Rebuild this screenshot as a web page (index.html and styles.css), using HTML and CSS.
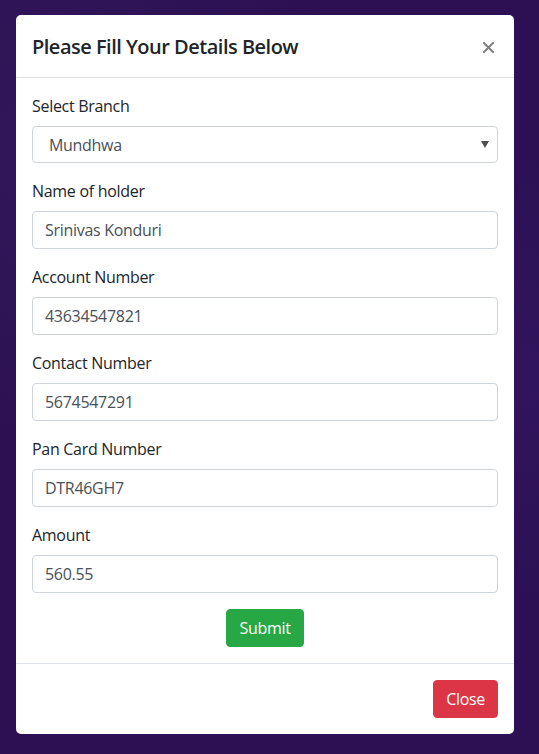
FILE: index.html
```html
<!DOCTYPE html>
<html lang="en">
<head>
<meta charset="utf-8">
<title>Please Fill Your Details Below</title>
<link rel="stylesheet" href="styles.css">
</head>
<body>
<div class="backdrop">
  <div class="modal">
    <div class="modal-header">
      <h5 class="modal-title">Please Fill Your Details Below</h5>
      <button class="close" type="button" aria-label="Close">
        <svg width="11" height="11" viewBox="0 0 11 11"><path d="M1 1L10 10M10 1L1 10" stroke="#808080" stroke-width="2" stroke-linecap="square"/></svg>
      </button>
    </div>
    <form class="modal-body">
      <div class="form-group">
        <label class="label">Select Branch</label>
        <div class="select">
          <span class="select-value">Mundhwa</span>
          <svg class="select-arrow" width="8" height="7" viewBox="0 0 8 7"><path d="M0 0H8L4 7Z" fill="#505050"/></svg>
        </div>
      </div>
      <div class="form-group">
        <label class="label">Name of holder</label>
        <div class="input">Srinivas Konduri</div>
      </div>
      <div class="form-group">
        <label class="label">Account Number</label>
        <div class="input">43634547821</div>
      </div>
      <div class="form-group">
        <label class="label">Contact Number</label>
        <div class="input">5674547291</div>
      </div>
      <div class="form-group">
        <label class="label">Pan Card Number</label>
        <div class="input">DTR46GH7</div>
      </div>
      <div class="form-group">
        <label class="label">Amount</label>
        <div class="input">560.55</div>
      </div>
      <div class="center">
        <button type="button" class="btn btn-success">Submit</button>
      </div>
    </form>
    <div class="modal-footer">
      <button type="button" class="btn btn-danger">Close</button>
    </div>
  </div>
</div>
</body>
</html>
```

FILE: styles.css
```css
* { box-sizing: border-box; }
html, body { margin: 0; padding: 0; height: 100%; }
body {
  font-family: "Open Sans", "Noto Sans", sans-serif;
  font-size: 16px;
  line-height: 1.5;
  color: #212529;
  background: #2d1053;
}
.backdrop {
  min-height: 754px;
  padding: 15px 25px 20px 16px;
  background:
    radial-gradient(circle at 10% 20%, rgba(80, 50, 130, 0.2), transparent 40%),
    radial-gradient(circle at 95% 50%, rgba(70, 40, 130, 0.2), transparent 40%),
    #2c1053;
}
.modal {
  width: 498px;
  background: #fff;
  border-radius: 5px;
  overflow: hidden;
}
.modal-header {
  display: flex;
  align-items: center;
  justify-content: space-between;
  height: 63px;
  padding: 2px 16px 0;
  border-bottom: 1px solid #dee2e6;
}
.modal-title {
  margin: 0;
  font-size: 20px;
  font-weight: 600;
  line-height: 30px;
  letter-spacing: -0.5px;
}
.close {
  display: flex;
  border: 0;
  background: none;
  padding: 0;
  margin-right: 4px;
}
.modal-body {
  display: block;
  padding: 16px;
}
.form-group { margin-bottom: 16px; }
.label {
  display: block;
  margin-bottom: 8px;
  line-height: 24px;
  letter-spacing: -0.3px;
}
.input, .select {
  height: 38px;
  padding: 6px 12px;
  border: 1px solid #ced4da;
  border-radius: 4px;
  color: #495057;
  line-height: 24px;
  letter-spacing: -0.3px;
}
.select {
  display: flex;
  align-items: center;
  justify-content: space-between;
  height: 37px;
  padding-left: 16px;
  padding-right: 8px;
}
.center { display: flex; justify-content: center; }
.btn {
  height: 38px;
  padding: 6px 12px;
  border: 1px solid transparent;
  border-radius: 4px;
  font-family: inherit;
  font-size: 16px;
  line-height: 24px;
  color: #fff;
  letter-spacing: -0.3px;
}
.btn-success { background: #28a745; border-color: #28a745; }
.btn-danger { background: #dc3545; border-color: #dc3545; }
.modal-footer {
  display: flex;
  justify-content: flex-end;
  padding: 16px;
  border-top: 1px solid #dee2e6;
}
```
